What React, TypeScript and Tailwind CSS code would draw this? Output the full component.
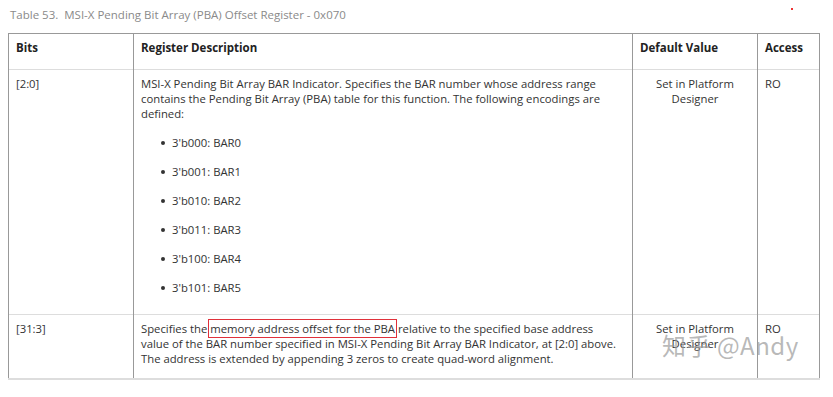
const bullets = ['000: BAR0', '001: BAR1', '010: BAR2', '011: BAR3', '100: BAR4', '101: BAR5']

export default function App() {
  return (
    <div className="relative w-[833px] h-[397px] bg-white text-[#333] font-['Open_Sans',sans-serif] text-[11.3px] leading-[15px]">
      <div className="absolute left-[791px] top-[8px] w-[2px] h-[2px] bg-[#e33]" />
      <div className="pl-[10px] pt-[7px] text-[11.5px] leading-[16px] text-[#8a8a8a]">
        Table 53.&nbsp; MSI-X Pending Bit Array (PBA) Offset Register - 0x070
      </div>
      <table className="ml-[8px] mt-[10px] w-[811px] table-fixed border-collapse">
        <colgroup>
          <col className="w-[125px]" />
          <col className="w-[499px]" />
          <col className="w-[125px]" />
          <col className="w-[62px]" />
        </colgroup>
        <thead>
          <tr className="h-[36px] border-t border-[#999] border-b border-b-[#ddd] text-left font-bold text-[#222] text-[11.5px]">
            <th className="border-x border-[#999] px-[7px] pb-[8px]">Bits</th>
            <th className="border-x border-[#999] px-[7px] pb-[8px]">Register Description</th>
            <th className="border-x border-[#999] px-[7px] pb-[8px]">Default Value</th>
            <th className="border-x border-[#999] px-[7px] pb-[8px]">Access</th>
          </tr>
        </thead>
        <tbody>
          <tr className="h-[245px] align-top border-b border-[#ddd]">
            <td className="border-x border-[#999] px-[7px] pt-[6px]">[2:0]</td>
            <td className="border-x border-[#999] px-[7px] pt-[6px]">
              <p>
                MSI-X Pending Bit Array BAR Indicator. Specifies the BAR number whose address range contains the Pending Bit Array (PBA) table for this function. The following encodings are defined:
              </p>
              <ul className="mt-[7px] pl-[20px]">
                {bullets.map((b) => (
                  <li key={b} className="flex items-center gap-[7px] h-[29px]">
                    <span className="w-[4px] h-[4px] rounded-full bg-[#333]" />
                    <span>3'b{b}</span>
                  </li>
                ))}
              </ul>
            </td>
            <td className="border-x border-[#999] px-[7px] pt-[6px] text-center">Set in Platform Designer</td>
            <td className="border-x border-[#999] px-[7px] pt-[6px]">RO</td>
          </tr>
          <tr className="h-[64px] align-top border-b-2 border-[#ddd]">
            <td className="border-x border-[#999] px-[7px] pt-[6px]">[31:3]</td>
            <td className="border-x border-[#999] px-[7px] pt-[6px]">
              Specifies the{' '}
              <span className="outline outline-[1.5px] outline-[#e0313b] outline-offset-[1px]">memory address offset for the PBA</span>{' '}
              relative to the specified base address
              <br />
              value of the BAR number specified in MSI-X Pending Bit Array BAR Indicator, at [2:0] above.
              <br />
              The address is extended by appending 3 zeros to create quad-word alignment.
            </td>
            <td className="border-x border-[#999] px-[7px] pt-[6px] text-center">Set in Platform Designer</td>
            <td className="border-x border-[#999] px-[7px] pt-[6px]">RO</td>
          </tr>
        </tbody>
      </table>
      <div className="absolute left-[662px] top-[331px] text-[24px] leading-[28px] text-[#9a9a9a]/70 font-['Noto_Sans_CJK_SC','Noto_Sans',sans-serif] tracking-[0.5px] whitespace-nowrap">
        知乎 @Andy
      </div>
    </div>
  )
}
